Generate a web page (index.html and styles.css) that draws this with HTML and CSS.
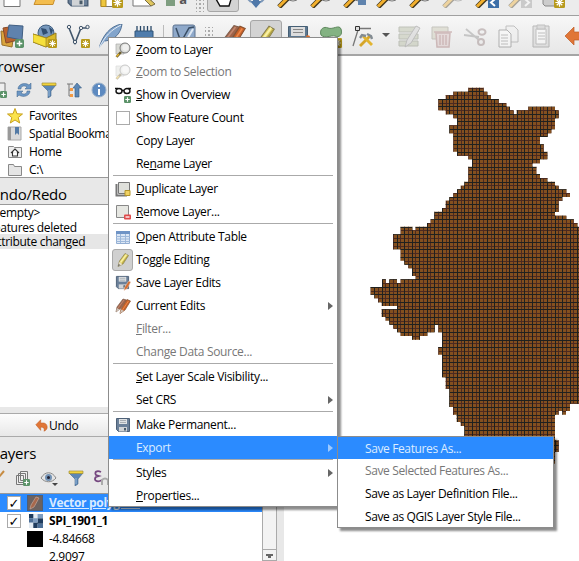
FILE: index.html
```html
<!DOCTYPE html>
<html lang="en">
<head>
<meta charset="utf-8">
<title>Layer menu</title>
<link rel="stylesheet" href="styles.css">
</head>
<body>
<svg class="defs" width="0" height="0">
  <defs>
    <symbol id="mag" viewBox="0 0 24 24"><path d="M12 13 L2 23" stroke="#40361c" stroke-width="5"/><path d="M10 14.500 L2 22.500" stroke="#f3b02e" stroke-width="3"/><path d="M13 12 l-3 3" stroke="#222" stroke-width="4"/><circle cx="16" cy="9" r="8" fill="#ededed" stroke="#777"/></symbol>
    <symbol id="lens" viewBox="0 0 16 16"><path d="M1 2h8v10H1z" fill="#d9dad5" stroke="#aaa" stroke-width=".7"/><path d="M6 10 L1.500 15" stroke="#6b5d30" stroke-width="2.600"/><path d="M4 12 L1.500 14.500" stroke="#e6b52e" stroke-width="1.500"/><circle cx="10" cy="6" r="5" fill="#dedfdc" stroke="#777"/><circle cx="10.500" cy="5.500" r="3.200" fill="#f0f0ef"/></symbol>
    <symbol id="pencil" viewBox="0 0 16 16"><path d="M3 14.500 L4.500 9 L10 1.500 L13.500 3.500 L8 12Z" fill="#dccb5c" stroke="#847b4c" stroke-width=".7"/><path d="M5.500 10.500 L11.500 2.500" stroke="#f8f0a4" stroke-width="1.400"/><path d="M7 12 L12.700 4" stroke="#a89a45" stroke-width=".9"/><path d="M3 14.500 L4.300 10 L7.500 12.300Z" fill="#e9dfc8"/><path d="M3 14.500l.7-2.500 1.500 1z" fill="#555"/></symbol>
    <symbol id="pencils" viewBox="0 0 16 16"><path d="M1 14 L2 9 L8 1 L11.500 2 L6 10Z" fill="#a0644a" stroke="#7d5d4c" stroke-width=".7"/><path d="M5 15.500 L6 11 L12 1.500 L15.500 3 L10 12Z" fill="#c9622a" stroke="#86502e" stroke-width=".7"/><path d="M7.500 12 L13.500 3" stroke="#ee8a4a"/><path d="M3 10L9 2" stroke="#c48970"/><path d="M1 14l1-4 2.500 1.500zM5 15.500l1-4 3 1.300z" fill="#cfc5ba"/></symbol>
    <symbol id="floppy" viewBox="0 0 16 16"><path d="M1.500 1.500h13v13h-11l-2-2z" fill="#6b8099" stroke="#4d6077"/><path d="M4 2h8v5H4z" fill="#dfe2e4"/><path d="M5 3.500h6M5 5.500h6" stroke="#9aa1a7" stroke-width=".8"/><path d="M4 10h8v4.500H4z" fill="#d0d3d6"/><path d="M9 11h2v2.500H9z" fill="#495a69"/></symbol>
    <symbol id="funnel" viewBox="0 0 16 16"><path d="M1 3h14L10 9v5L7 16V9z" fill="#5c87b5" stroke="#466889" stroke-width=".6"/><path d="M8 8v6" stroke="#96b7d8"/><path d="M1 1h14v2.500H1z" fill="#f1d33b" stroke="#a1903c" stroke-width=".7"/></symbol>
    <symbol id="badge" viewBox="0 0 8 8"><rect width="8" height="8" rx="1" fill="#b89a1c"/><path d="M4 1v6M1 4h6M2 2l4 4M6 2L2 6" stroke="#fff" stroke-width=".9"/></symbol>
    <symbol id="undo" viewBox="0 0 16 16"><path d="M7 1v4c6-1 8 2 8 5 0 2-1 4-4 5 1-3 0-5-4-5v4L1 7z" fill="#e07637" stroke="#bb5a22" stroke-width=".6"/></symbol>
    <symbol id="plus" viewBox="0 0 8 8"><rect width="8" height="8" rx="1.500" fill="#5b9268"/><path d="M4 1.500v5M1.500 4h5" stroke="#fff" stroke-width="1.300"/></symbol>
  </defs>
</svg>
<div class="app">
  <div class="bar file-bar">
    <span class="cell"><svg class="i24" viewBox="0 0 24 24"><path d="M4 0v22.500h16V0" fill="#fff" stroke="#777"/></svg></span>
    <span class="cell"><svg class="i24" viewBox="0 0 24 24"><path d="M1 20.500L5 11h18l-3 9.500z" fill="#f3bd4e" stroke="#c78e2b"/></svg></span>
    <span class="cell"><svg class="i24"><use href="#floppy"/></svg></span>
    <span class="cell"><svg class="i24" viewBox="0 0 24 24"><path d="M2 8h20v14.500H2z" fill="#fff" stroke="#777"/><path d="M2 14h5v8.500H2z" fill="#eec73e" stroke="#b38b1e"/><use href="#badge" x="13" y="13" width="11" height="11"/></svg></span>
    <span class="cell"><svg class="i24" viewBox="0 0 24 24"><path d="M1 5h18v17H1z" fill="#fff" stroke="#777"/><path d="M10 13l9 9 4-2-9-8" fill="#dfc65f" stroke="#776b42"/></svg></span>
    <span class="cell letter"><i></i>a</span>
    <span class="grip"></span>
    <span class="cell tight pressed"><svg class="i24" viewBox="0 0 24 24"><path d="M5 8v8l4 7h9l3-10V7z" fill="#fff" stroke="#111" stroke-width="1.400"/></svg></span>
    <span class="cell"><svg class="i24" viewBox="0 0 24 24"><path d="M9 12h6v5h3l-6 7-6-7h3z" fill="#4f78a9"/><path d="M4 15l3 3M20 15l-3 3" stroke="#7c97b8" stroke-width="2"/></svg></span>
    <span class="cell"><svg class="i24"><use href="#mag"/></svg></span>
    <span class="cell"><svg class="i24"><use href="#mag"/></svg></span>
    <span class="cell"><svg class="i24" viewBox="0 0 24 24"><use href="#mag"/><path d="M15 13h8v8h-8z" fill="#5f83ad"/></svg></span>
    <span class="cell"><svg class="i24"><use href="#mag"/></svg></span>
    <span class="cell"><svg class="i24"><use href="#mag"/></svg></span>
    <span class="cell faded"><svg class="i24"><use href="#mag"/></svg></span>
    <span class="cell"><svg class="i24" viewBox="0 0 24 24"><use href="#mag"/><path d="M13 13h11v11H13z" fill="#3c6fa8"/><path d="M20 15l-4 3.500 4 3.500" fill="none" stroke="#fff" stroke-width="2"/></svg></span>
    <span class="cell faded"><svg class="i24" viewBox="0 0 24 24"><use href="#mag"/><path d="M13 13h11v11H13z" fill="#999"/><path d="M17 15l4 3.500-4 3.500" fill="none" stroke="#fff" stroke-width="2"/></svg></span>
    <span class="cell"><svg class="i24" viewBox="0 0 24 24"><path d="M2 8h14v14H4l-2-2z" fill="#ccc" stroke="#888"/><use href="#badge" x="13" y="13" width="11" height="11"/></svg></span>
  </div>
  <div class="bar edit-bar">
    <span class="cell"><svg class="i24" viewBox="0 0 24 24"><path d="M1 7l13 2-2 14-10-2z" fill="#d9a43c" stroke="#99712a"/><path d="M3 4l12-2 3 14-12 3z" fill="#b9622d" stroke="#874a28"/><path d="M9 1l14 1-1 14-15-3z" fill="#5f82ad" stroke="#415f83"/><use href="#plus" x="15" y="15" width="9" height="9"/></svg></span>
    <span class="cell"><svg class="i24" viewBox="0 0 24 24"><circle cx="13" cy="9" r="8" fill="#7899bd" stroke="#3e5d7f"/><path d="M8 4l5 1 2 4-5 2zM16 3l4 3-2 5z" fill="#304e70"/><path d="M0 10l13 4 10-5v9l-10 5-13-5z" fill="#d9b928" stroke="#937b1b"/><path d="M0 10l13 4v9l-13-5z" fill="#f6e03c" stroke="#937b1b" stroke-width=".6"/><use href="#badge" x="15" y="15" width="9" height="9"/></svg></span>
    <span class="cell"><svg class="i24" viewBox="0 0 24 24"><path d="M3 4l6 15 6-15h7" fill="none" stroke="#41566c" stroke-width="1.600"/><g fill="#eee" stroke="#41566c"><circle cx="3" cy="3" r="1.700"/><circle cx="9" cy="18" r="1.700"/><circle cx="15" cy="4" r="1.700"/><circle cx="21.500" cy="3" r="1.700"/></g><use href="#badge" x="15" y="15" width="9" height="9"/></svg></span>
    <span class="cell"><svg class="i24" viewBox="0 0 24 24"><path d="M0 24C4 11 11 2 23 0c-1 9-7 16-17 17" fill="#83a5cc" stroke="#527297"/><path d="M0 24C6 12 12 6 22 1" stroke="#e7eff7" fill="none"/></svg></span>
    <span class="cell"><svg class="i24" viewBox="0 0 24 24"><path d="M5 2v6M8.500 2v6M12 2v6M15.500 2v6M19 2v6" stroke="#294867" stroke-width="1.300"/><path d="M3 7h18v14H3z" fill="#4f7cac" stroke="#315579"/></svg></span>
    <span class="rule"></span>
    <span class="cell"><svg class="i24" viewBox="0 0 24 24"><rect x="1" y="1" width="22" height="22" rx="2" fill="#8fa9ca" stroke="#5e7591"/><path d="M4 4l5 14L17 4l5-1" fill="none" stroke="#394d64" stroke-width="1.500"/><path d="M14 17l7-12" stroke="#e0e9f3" stroke-width="2"/></svg></span>
    <span class="grip"></span>
    <span class="cell tight"><svg class="i24"><use href="#pencils"/></svg></span>
    <span class="cell tight pressed"><svg class="i24"><use href="#pencil"/></svg></span>
    <span class="cell tight"><svg class="i24" viewBox="0 0 24 24"><path d="M2.500 2.500h19V24h-19z" fill="#5d7890" stroke="#465f75"/><path d="M5 3h14v9H5z" fill="#ddd"/><path d="M7 5.500h10M7 8.500h10" stroke="#888"/><path d="M16 20l5-9 3 1-3 10z" fill="#d56b2d"/></svg></span>
    <span class="cell"><svg class="i24" viewBox="0 0 24 24"><path d="M2 11C0 5 5 2 9 4c5 2 11-4 13 1 2 6-2 9-6 7-4-1-10 3-14-1z" fill="#83b282" stroke="#5d875c"/><use href="#badge" x="13" y="14" width="10" height="10"/></svg></span>
    <span class="cell"><svg class="i24" viewBox="0 0 24 24"><path d="M6 6L1 22M6 4.500h13" stroke="#777" stroke-width="1.300"/><path d="M3.500 2.500h4v4h-4z" fill="#ddd" stroke="#333"/><path d="M8 22L18 12" stroke="#d6a629" stroke-width="2.800"/><path d="M11 12l9 9" stroke="#e2b430" stroke-width="2.800"/><path d="M8 14l2-3 4 1M15 10l4 2 1 3" stroke="#828b92" stroke-width="2.400" fill="none"/></svg></span>
    <span class="drop"></span>
    <span class="cell faded"><svg class="i24" viewBox="0 0 24 24"><path d="M2 3h19v5H2zM2 10h19v5H2zM2 17h19v5H2z" fill="#b1b89c" stroke="#777d68"/><path d="M8 23l2-7L19 2l4 2-9 15z" fill="#ccc" stroke="#777"/></svg></span>
    <span class="cell faded"><svg class="i24" viewBox="0 0 24 24"><path d="M2 3h16v12H2z" fill="#c6c5ad" stroke="#858275"/><path d="M6 9h14l-1 14H7z" fill="#d7bcbc" stroke="#9e6c6c" stroke-width="1.500"/><path d="M4 8h18M10 11v10M13 11v10M16 11v10" stroke="#a36e6e" stroke-width="1.500"/></svg></span>
    <span class="cell faded"><svg class="i24" viewBox="0 0 24 24"><path d="M1 11l15 2M3 5l13 11" stroke="#888" stroke-width="1.800"/><g fill="none" stroke="#8d7777" stroke-width="2"><ellipse cx="19" cy="8" rx="3.500" ry="2.800"/><ellipse cx="18" cy="18" rx="3" ry="3"/></g></svg></span>
    <span class="cell faded"><svg class="i24" viewBox="0 0 24 24"><path d="M10 2h8l4 4v12H10z" fill="#eee" stroke="#777"/><path d="M3 6h8l4 4v13H3z" fill="#fff" stroke="#555"/><path d="M5 11h7M5 14h7M5 17h7M5 20h7" stroke="#777"/></svg></span>
    <span class="cell faded"><svg class="i24" viewBox="0 0 24 24"><path d="M4 2h16v21H4z" fill="#ccc" stroke="#666"/><path d="M7 5h10v15H7z" fill="#fff" stroke="#777"/><path d="M8 1h8v4H8z" fill="#bbb" stroke="#777"/><path d="M9 9h7M9 12h7M9 15h7" stroke="#777"/></svg></span>
    <span class="cell"><svg class="i24" viewBox="0 0 24 24"><path d="M12 3v5h12v14h-6v-6h-6v5L3 12z" fill="#e07637" stroke="#bd5c25" stroke-width=".7"/></svg></span>
  </div>
  <div class="work">
    <aside class="docks">
      <h2 class="dock-title browser-title">Browser</h2>
      <div class="dock-tools">
        <svg class="i16" viewBox="0 0 16 16"><path d="M0 1h14v12H0z" fill="#eee" stroke="#777"/><use href="#plus" x="9" y="9" width="7" height="7"/></svg>
        <svg class="i16" viewBox="0 0 16 16"><path d="M2 7c0-5 7-7 11-4l2-2v6H9l2-2C8 3 5 4 5 7zM14 9c0 5-7 7-11 4l-2 2V9h6l-2 2c3 2 6 1 6-2z" fill="#6c97c5" stroke="#42658a" stroke-width=".5"/></svg>
        <svg class="i16"><use href="#funnel"/></svg>
        <svg class="i16" viewBox="0 0 16 16"><path d="M1 2h6M3 2v12h4M3 8h4" fill="none" stroke="#777"/><path d="M4 6h3v3H4zM4 12h3v3H4z" fill="#f39a43"/><path d="M11 1l4.500 5H13v9H9V6H7z" fill="#5c87b5" stroke="#365b81" stroke-width=".6"/></svg>
        <svg class="i16" viewBox="0 0 16 16"><circle cx="8" cy="8" r="7" fill="#5d8ac0" stroke="#9ab0c9"/><path d="M8 3v2M8 7v6" stroke="#fff" stroke-width="2"/></svg>
      </div>
      <ul class="tree">
        <li><svg class="i16" viewBox="0 0 16 16"><path d="M8 .5l2 5.300 5.500.2-4.300 3.500 1.500 5.500L8 12l-4.700 3 1.500-5.500L.5 6 6 5.800z" fill="#fbe34c" stroke="#c8a11d"/></svg>Favorites</li>
        <li><svg class="i16" viewBox="0 0 16 16"><path d="M1 1h13v13H1z" fill="#d9d9d9" stroke="#aaa"/><path d="M1 1h3v13H1z" fill="#999"/><path d="M8 1h4v8L10 7 8 9z" fill="#537aa5"/></svg>Spatial Bookmarks</li>
        <li><svg class="i16" viewBox="0 0 16 16"><path d="M1.500 2.500h5l1 1h7v10h-13z" fill="#eee" stroke="#888"/><path d="M4 9l4-4 4 4M5.500 8v4h5V8" fill="#fff" stroke="#333" stroke-width="1.100"/></svg>Home</li>
        <li><svg class="i16" viewBox="0 0 16 16"><path d="M1.500 2.500h5l1 2h7v9h-13z" fill="#e5e5e5" stroke="#888"/></svg>C:\</li>
      </ul>
      <h2 class="dock-title undo-title">Undo/Redo</h2>
      <ul class="history"><li>&lt;empty&gt;</li><li>Features deleted</li><li class="current">Attribute changed</li></ul>
      <div class="undo-row"><svg class="i12"><use href="#undo"/></svg>Undo</div>
      <h2 class="dock-title layers-title">Layers</h2>
      <div class="dock-tools layer-tools">
        <svg class="i16" viewBox="0 0 16 16"><path d="M15 1L9 8" stroke="#c68b42" stroke-width="2"/><path d="M7 6l4 4-5 5-5-3z" fill="#e9bd4b" stroke="#a67b2a"/></svg>
        <svg class="i16" viewBox="0 0 16 16"><path d="M5.500 1.500h7v9h-7zM3.500 3.500h7v9h-7zM1.500 5.500h7v9h-7z" fill="#eee" stroke="#777"/><use href="#plus" x="8" y="9" width="7" height="7"/></svg>
        <svg class="i18" viewBox="0 0 18 16"><path d="M1 8c4-7 11-7 15 0-4 5-11 5-15 0z" fill="#e4e4e4" stroke="#888"/><circle cx="8.500" cy="7.500" r="3.500" fill="#7392b4"/><circle cx="8.500" cy="7.500" r="1.500" fill="#223"/><path d="M12 13h6l-3 3z" fill="#444"/></svg>
        <svg class="i16"><use href="#funnel"/></svg>
        <svg class="i16" viewBox="0 0 16 16"><path d="M8 2C4 0 1 2 3 5l3 1-3 1c-3 3 1 6 6 3" fill="none" stroke="#75477f" stroke-width="1.800"/><path d="M9 15v-5q3-3 6 0v5" fill="none" stroke="#aaa" stroke-width="2"/></svg>
      </div>
      <div class="layers">
        <div class="layer-list">
          <div class="layer selected"><span class="check">✓</span><span class="swatch edit"><svg class="i14" viewBox="0 0 14 14"><path d="M2 13l1-4 5-8 3 1-5 9z" fill="#a8684c" stroke="#c3a799" stroke-width=".7"/></svg></span><b class="link">Vector polygons</b></div>
          <div class="layer"><span class="check">✓</span><svg class="i14 raster" viewBox="0 0 13 13"><path d="M0 0h13v13H0z" fill="#e3ebf3"/><path d="M0 0h4v4H0zM8 4h5v5H8zM4 8h4v5H4z" fill="#1f3c5e"/><path d="M4 4h4v4H4zM8 0h5v4H8z" fill="#7d9cc0"/><path d="M0 4h4v4H0zM8 9h5v4H8z" fill="#4d6f97"/></svg><b>SPI_1901_1</b></div>
          <div class="legend"><span class="black"></span>-4.84668</div>
          <div class="legend"><span class="black none"></span>2.9097</div>
        </div>
        <div class="scroll"><i></i></div>
      </div>
    </aside>
    <main class="map">
      <svg class="grid" viewBox="0 0 219 395" width="219" height="395">
        <clipPath id="region"><path transform="scale(.33333)" d="M325 38H371V50H382V61H393V72H416V84H439V95H450V106H461V118H470V106H505V95H585V106H596V130H585V163H574V175H563V186H540V208H551V230H562V253H540V265H517V275H529V297H540V309H562V320H585V332H596V343H619V354H630V366H607V377H596V411H585V422H619V433H641V444H652V455H660V986H630V1008H618V1019H607V1008H596V1019H585V1096H596V1131H585V1166H313V1053H302V1041H290V1019H279V996H268V941H257V907H246V839H235V816H246V772H235V750H224V772H202V783H180V794H156V783H122V772H111V761H100V749H88V737H77V726H65V703H111V693H65V682H54V670H43V659H32V636H66V613H77V624H88V613H111V624H122V613H167V603H156V580H145V569H133V557H122V523H99V478H122V455H157V466H167V455H201V444H212V433H223V410H246V399H257V377H268V366H280V354H291V343H302V332H313V320H325V275H336V253H325V242H291V230H280V175H268V151H291V130H280V118H257V106H235V72H257V61H280V50H325Z"/></clipPath>
        <g clip-path="url(#region)" shape-rendering="crispEdges">
          <path class="ground" d="M0 0h219v395H0z"/>
          <path class="lines soft" id="soft"/>
          <path class="lines" id="hard"/>
        </g>
      </svg>
    </main>
  </div>
</div>

<nav class="menu main-menu">
  <div class="item first"><span class="ico"><svg class="i16"><use href="#lens"/></svg></span><span><u>Z</u>oom to Layer</span></div>
  <div class="item off"><span class="ico pale"><svg class="i16"><use href="#lens"/></svg></span><span><u>Z</u>oom to Selection</span></div>
  <div class="item"><span class="ico"><svg class="i16" viewBox="0 0 16 16"><path d="M0 1.500h3M13 1.500h3M6.500 3.500h3" stroke="#111" stroke-width="1.300"/><ellipse cx="4" cy="4" rx="3" ry="2.500" fill="#fff" stroke="#111" stroke-width="1.400"/><ellipse cx="12" cy="4" rx="3" ry="2.500" fill="#fff" stroke="#111" stroke-width="1.400"/><use href="#plus" x="9" y="9" width="7" height="7"/></svg></span><span><u>S</u>how in Overview</span></div>
  <div class="item"><span class="ico"><i class="box"></i></span><span>Show Feature Count</span></div>
  <div class="item"><span class="ico"></span><span>Copy Layer</span></div>
  <div class="item"><span class="ico"></span><span>Re<u>n</u>ame Layer</span></div>
  <hr>
  <div class="item"><span class="ico"><svg class="i16" viewBox="0 0 16 16"><path d="M1.500 3v11.500H12" fill="none" stroke="#777" stroke-width="2"/><path d="M3.500 1.500h11v11h-11z" fill="#dfe0db" stroke="#777"/><path d="M10 9.500h5v5h-5z" fill="#f0d264" stroke="#b3952b"/></svg></span><span><u>D</u>uplicate Layer</span></div>
  <div class="item"><span class="ico"><svg class="i16" viewBox="0 0 16 16"><path d="M1.500 1.500h12v12h-12z" fill="#e6e7e2" stroke="#888"/><rect x="9" y="10.500" width="7" height="5" rx="1" fill="#df4b4b"/><path d="M10.500 13h4" stroke="#fff" stroke-width="1.300"/></svg></span><span><u>R</u>emove Layer...</span></div>
  <hr>
  <div class="item"><span class="ico"><svg class="i16" viewBox="0 0 16 16"><path d="M1.500 2.500h13v12h-13z" fill="#dce7f5" stroke="#93aed2"/><path d="M1 2h14v3H1z" fill="#6f94c6"/><path d="M1 7.500h14M1 10h14M1 12.500h14M5.500 5v9M10.500 5v9" stroke="#9db8da"/></svg></span><span><u>O</u>pen Attribute Table</span></div>
  <div class="item"><span class="ico held"><svg class="i16"><use href="#pencil"/></svg></span><span>Toggle Editing</span></div>
  <div class="item"><span class="ico"><svg class="i16" viewBox="0 0 16 16"><use href="#floppy" width="15" height="15"/><path d="M9 15.500l.7-3.500 4-6 2 1-3.500 6.500z" fill="#d66d30" stroke="#e9d5c5" stroke-width=".5"/></svg></span><span>Save Layer Edits</span></div>
  <div class="item"><span class="ico"><svg class="i16"><use href="#pencils"/></svg></span><span>Current Edits</span><i class="arrow"></i></div>
  <div class="item off"><span class="ico"></span><span><u>F</u>ilter...</span></div>
  <div class="item off"><span class="ico"></span><span>Change Data Source...</span></div>
  <hr>
  <div class="item"><span class="ico"></span><span><u>S</u>et Layer Scale Visibility...</span></div>
  <div class="item"><span class="ico"></span><span>Set CRS</span><i class="arrow"></i></div>
  <hr>
  <div class="item"><span class="ico"><svg class="i16"><use href="#floppy"/></svg></span><span>Make Permanent...</span></div>
  <div class="item active"><span class="ico"></span><span>Export</span><i class="arrow"></i></div>
  <hr>
  <div class="item"><span class="ico"></span><span>Styles</span><i class="arrow"></i></div>
  <div class="item"><span class="ico"></span><span><u>P</u>roperties...</span></div>
</nav>
<nav class="menu sub-menu">
  <div class="item active first">Save Features As...</div>
  <div class="item off">Save Selected Features As...</div>
  <div class="item">Save as Layer Definition File...</div>
  <div class="item">Save as QGIS Layer Style File...</div>
</nav>
<script src="grid.js"></script>
</body>
</html>
```
FILE: styles.css
```css
* { box-sizing: border-box; }
body { margin: 0; width: 579px; height: 561px; overflow: hidden; position: relative; font: 12px/16px "Open Sans", "Noto Sans", sans-serif; letter-spacing: -0.32px; color: #000; background: #e8e8e8; }
.defs { position: absolute; }
ul { list-style: none; margin: 0; padding: 0; }
svg { flex: none; display: block; }
.i24 { width: 24px; height: 24px; }
.i18 { width: 18px; height: 16px; }
.i16 { width: 16px; height: 16px; }
.i14 { width: 14px; height: 14px; }
.i12 { width: 13px; height: 13px; }
.app { display: flex; flex-direction: column; height: 561px; overflow: hidden; }

.bar { display: flex; flex: none; overflow: hidden; background: linear-gradient(#f7f7f7, #e7e7e7); }
.bar .cell:first-child { margin-left: -5px; }
.file-bar { height: 16px; align-items: flex-end; padding-bottom: 3px; border-bottom: 1px solid #a0a0a0; background: #ececec; }
.file-bar .cell { height: 30px; align-items: flex-end; padding-bottom: 4px; }
.edit-bar { height: 40px; border-bottom: 2px solid #a5a5a5; padding-top: 4px; }
.cell { display: flex; flex: none; width: 33px; height: 31px; align-items: center; justify-content: center; }
.tight { width: 32px; }
.pressed { background: #d3d3d3; border: 1px solid #a6a6a6; border-radius: 3px; }
.faded { opacity: .4; }
.letter { font: bold 13px/13px "Open Sans", sans-serif; color: #555; gap: 4px; }
.file-bar .letter { padding-bottom: 6px; }
.letter i { width: 9px; height: 12px; background: #7e9d80; }
.grip { flex: none; width: 18px; height: 16px; margin-top: 7px; background: radial-gradient(circle, #aaa 0.8px, transparent 1px) center / 4px 4px; background-clip: content-box; padding: 0 5px; }
.file-bar .grip { width: 14px; padding: 0 3px; }
.rule { flex: none; width: 1px; height: 24px; margin: 5px 3px 0; background: #bbb; }
.drop { flex: none; align-self: center; border: 4px solid transparent; border-top-color: #555; border-bottom: 0; margin: 0 2px 4px; }

.work { display: flex; flex: 1; min-height: 0; }
.docks { display: flex; flex-direction: column; flex: none; width: 284px; background: #e8e8e8; }
.map { flex: 1; background: #fff; padding: 19px 0 0 76px; overflow: hidden; }
.ground { fill: #84501f; }
.lines { fill: #1f211f; }
.soft { fill: #4c2a20; }
.dock-title { margin: 0; font-weight: 400; font-size: 15px; line-height: 20px; letter-spacing: -0.2px; width: 100%; overflow: hidden; white-space: nowrap; }
.browser-title { text-indent: -12px; height: 22px; }
.dock-tools { display: flex; align-items: center; gap: 9px; height: 27px; margin-left: -9px; padding: 0 0 4px; }
.tree { height: 72px; background: #fff; border-top: 1px solid #999; padding-top: 1px; }
.tree li { display: flex; align-items: center; height: 18px; gap: 6px; padding-left: 7px; }
.undo-title { height: 27px; padding-top: 6px; border-top: 1px solid #999; text-indent: -11px; }
.history { height: 203px; background: #fff; border-top: 1px solid #999; }
.history li { height: 15px; line-height: 15px; text-indent: -7px; }
.history li:nth-child(2) { text-indent: -12px; height: 14px; }
.history .current { background: #e6e6e6; text-indent: -10px; }
.undo-row { display: flex; align-items: center; flex: none; gap: 1px; height: 24px; margin-top: 6px; padding: 1px 0 0 35px; border: 1px solid #aaa; border-left: 0; background: linear-gradient(#fdfdfd, #e8e8e8); }
.layers-title { height: 29px; padding-top: 6px; text-indent: -8px; }
.layer-tools { margin-left: -11px; gap: 9.500px; }
.layers { display: flex; flex: 1; min-height: 0; border-top: 1px solid #999; padding-right: 7px; }
.layer-list { flex: 1; background: #fff; overflow: hidden; }
.layer { display: flex; align-items: center; height: 18px; padding-left: 7px; }
.selected { background: #2b8bff; color: #d9eaff; }
.check { width: 14px; height: 14px; background: #fff; border: 1px solid #aaa; color: #000; font: bold 13px/13px "DejaVu Sans", sans-serif; text-align: center; letter-spacing: 0; }
.swatch { margin: 0 6px; width: 16px; height: 16px; background: #6c6260; border: 1px solid #4e5f78; }
.raster { margin: 0 6px 0 8px; }
.link { text-decoration: underline; }
.legend { display: flex; height: 18px; align-items: center; padding-left: 27px; gap: 6px; }
.black { width: 16px; height: 16px; background: #000; }
.none { visibility: hidden; }
.scroll { width: 15px; border: 1px solid #aaa; background: #f3f3f3; display: flex; align-items: flex-end; justify-content: center; }
.scroll i { width: 13px; height: 11px; border-top: 1px solid #aaa; background: linear-gradient(#666, #666) center 4px / 7px 2px no-repeat, linear-gradient(#666, #666) center 6px / 3px 2px no-repeat; }

.menu { position: absolute; background: #fff; border: 1px solid #8c8c8c; box-shadow: 3px 3px 2px rgba(0, 0, 0, .45); white-space: nowrap; }
.main-menu { left: 108px; top: 37px; width: 230px; height: 470px; }
.sub-menu { left: 337px; top: 436px; width: 217px; height: 92px; letter-spacing: -0.38px; }
.item { display: flex; align-items: center; height: 23px; padding-top: 1px; }
.first { height: 22px; }
.sub-menu .item { padding-left: 27px; }
.ico { display: flex; flex: none; align-items: center; justify-content: center; width: 21px; height: 22px; margin: 0 3px; }
.pale { opacity: .4; }
.held { background: #d0d0d0; border: 1px solid #aaa; border-radius: 3px; }
.box { width: 14px; height: 14px; border: 1px solid #aaa; }
.off { color: #777; }
.active { background: #2b8bff; color: #dcecff; }
.arrow { margin-left: auto; margin-right: 4px; border: 4px solid transparent; border-left: 5px solid #666; border-right: 0; }
.active .arrow { border-left-color: #9cc9ff; }
.menu hr { height: 2px; margin: 0 4px; border: 0; border-top: 1px solid #aaa; }
u { text-underline-offset: 1px; }
```
FILE: grid.js
```js
// Cell borders, snapped to whole pixels; dark and reddish ones alternate.
const pitch = 3.76;
const parts = { soft: "", hard: "" };
for (let k = -25; k < 110; k++) {
  const x = Math.round(78 + k * pitch);
  const y = Math.round(12.6 + k * pitch);
  const kind = k % 2 === 0 ? "soft" : "hard";
  parts[kind] += `M${x} 0h1v395h-1zM0 ${y}h219v1H0z`;
}
document.getElementById("soft").setAttribute("d", parts.soft);
document.getElementById("hard").setAttribute("d", parts.hard);
```
